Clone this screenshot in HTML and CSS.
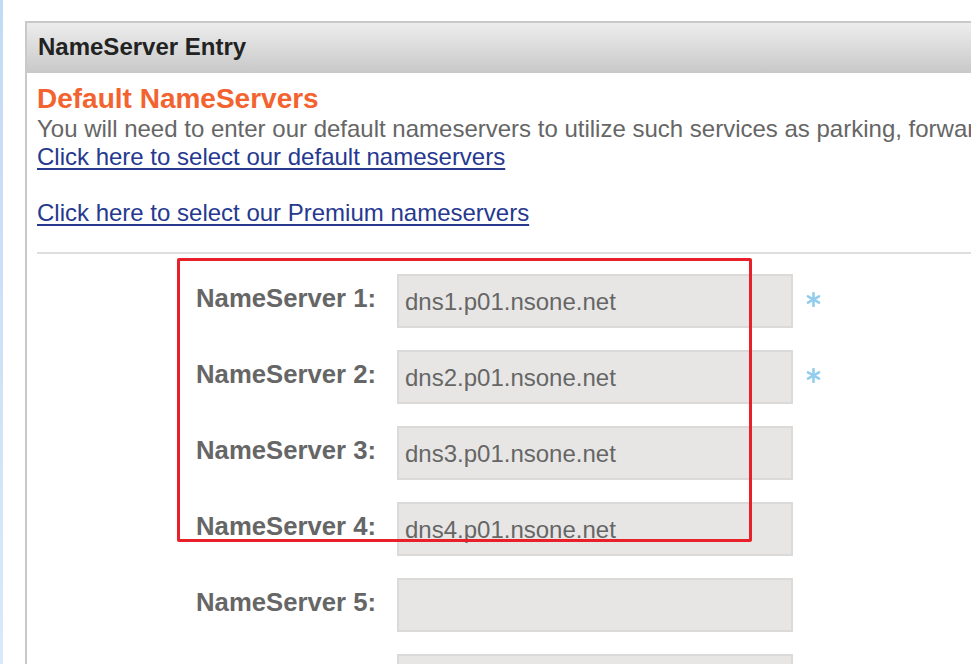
FILE: index.html
```html
<!DOCTYPE html>
<html>
<head>
<meta charset="utf-8">
<link rel="stylesheet" href="styles.css">
</head>
<body>
<div class="page">
  <div class="strip"></div>
  <div class="main">
    <div class="panel">
      <div class="panel-head">NameServer Entry</div>
      <div class="panel-body">
        <h2 class="title">Default NameServers</h2>
        <p class="intro">You will need to enter our default nameservers to utilize such services as parking, forwarding, email and hosting.<br>
          <a href="#" class="link">Click here to select our default nameservers</a><br><br>
          <a href="#" class="link">Click here to select our Premium nameservers</a>
        </p>
        <hr class="rule">
        <div class="form">
          <div class="annot"></div>
          <label class="label">NameServer 1:</label>
          <div class="field">dns1.p01.nsone.net</div>
          <div class="req"><svg width="15" height="15" viewBox="0 0 14 14"><g stroke="#93cdee" stroke-width="2.4" stroke-linecap="round"><line x1="7" y1="1" x2="7" y2="13"/><line x1="1.8" y1="4" x2="12.2" y2="10"/><line x1="1.8" y1="10" x2="12.2" y2="4"/></g></svg></div>

          <label class="label">NameServer 2:</label>
          <div class="field">dns2.p01.nsone.net</div>
          <div class="req"><svg width="15" height="15" viewBox="0 0 14 14"><g stroke="#93cdee" stroke-width="2.4" stroke-linecap="round"><line x1="7" y1="1" x2="7" y2="13"/><line x1="1.8" y1="4" x2="12.2" y2="10"/><line x1="1.8" y1="10" x2="12.2" y2="4"/></g></svg></div>

          <label class="label">NameServer 3:</label>
          <div class="field">dns3.p01.nsone.net</div>
          <div class="req"></div>

          <label class="label">NameServer 4:</label>
          <div class="field">dns4.p01.nsone.net</div>
          <div class="req"></div>

          <label class="label">NameServer 5:</label>
          <div class="field"></div>
          <div class="req"></div>

          <label class="label">NameServer 6:</label>
          <div class="field"></div>
          <div class="req"></div>
        </div>
      </div>
    </div>
  </div>
</div>
</body>
</html>
```
FILE: styles.css
```css
html, body {
  margin: 0;
  padding: 0;
  height: 664px;
  overflow: hidden;
  background: #fff;
  font-family: "Liberation Sans", Arial, sans-serif;
}
.page {
  display: flex;
  height: 664px;
}
.strip {
  width: 3px;
  flex: none;
  background: linear-gradient(#c2dbf4, #d9e9fa);
}
.main {
  padding: 21px 0 0 22px;
  flex: none;
}
.panel {
  width: 1100px;
  border-top: 2px solid #c9c9c9;
  border-left: 2px solid #c9c9c9;
  height: 700px;
}
.panel-head {
  height: 50px;
  line-height: 48px;
  padding-left: 11px;
  font-size: 24px;
  font-weight: bold;
  color: #222;
  background: linear-gradient(#ededed, #c8c8c8);
}
.panel-body {
  padding-left: 10px;
}
.title {
  margin: 10px 0 0;
  font-size: 28px;
  line-height: 32px;
  font-weight: bold;
  color: #f26330;
}
.intro {
  margin: 0;
  font-size: 24px;
  line-height: 28px;
  color: #666;
  white-space: nowrap;
}
.link {
  color: #26398f;
  text-decoration: underline;
  text-decoration-thickness: 2px;
  text-underline-offset: 3px;
}
.rule {
  margin: 25px 0 0;
  border: 0;
  height: 2px;
  background: #dedede;
}
.form {
  position: relative;
  margin-top: 20px;
  display: grid;
  grid-template-columns: 339px 396px 40px;
  column-gap: 21px;
  row-gap: 22px;
}
.label {
  justify-self: end;
  align-self: center;
  font-size: 25.7px;
  font-weight: bold;
  color: #666;
  padding-bottom: 6px;
}
.field {
  box-sizing: border-box;
  height: 54px;
  border: 2px solid #dcdad9;
  background: #e8e6e5;
  padding: 0 6px;
  font-size: 24px;
  line-height: 52px;
  color: #666;
}
.req {
  align-self: center;
  margin-left: -8px;
  height: 15px;
  margin-top: -4px;
}
.req svg {
  display: block;
}
.annot {
  position: absolute;
  left: 140px;
  top: -16px;
  width: 569px;
  height: 278px;
  border: 3px solid #e8202a;
  border-radius: 2px;
  pointer-events: none;
  z-index: 2;
}
```
